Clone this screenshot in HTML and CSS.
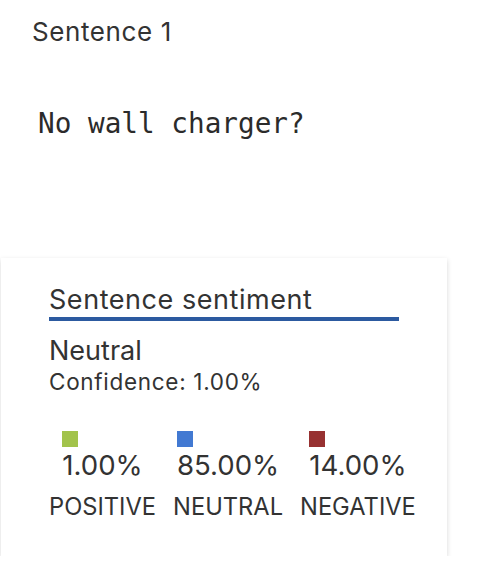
FILE: index.html
```html
<!DOCTYPE html>
<html>
<head>
<meta charset="utf-8">
<link rel="stylesheet" href="styles.css">
</head>
<body>
<div class="page">
  <div class="title">Sentence 1</div>
  <div class="sentence">No wall charger?</div>
  <div class="card">
    <div class="card-head">Sentence sentiment</div>
    <div class="result">Neutral</div>
    <div class="confidence">Confidence: 1.00%</div>
    <div class="legend">
      <div class="col">
        <div class="stat">
          <span class="swatch swatch-pos"></span>
          <span class="value">1.00%</span>
        </div>
        <div class="label">POSITIVE</div>
      </div>
      <div class="col">
        <div class="stat">
          <span class="swatch swatch-neu"></span>
          <span class="value">85.00%</span>
        </div>
        <div class="label">NEUTRAL</div>
      </div>
      <div class="col">
        <div class="stat">
          <span class="swatch swatch-neg"></span>
          <span class="value">14.00%</span>
        </div>
        <div class="label">NEGATIVE</div>
      </div>
    </div>
  </div>
</div>
</body>
</html>
```
FILE: styles.css
```css
html, body {
  margin: 0;
  padding: 0;
  background: #ffffff;
}
body {
  font-family: Inter, "Noto Sans", sans-serif;
  color: #333333;
}
.page {
  padding-top: 16px;
}
.title {
  margin-left: 32px;
  font-size: 26px;
  line-height: 32px;
  letter-spacing: 0.6px;
}
.sentence {
  margin-left: 38px;
  margin-top: 58.6px;
  font-family: "DejaVu Sans Mono", monospace;
  font-size: 27.7px;
  line-height: 34px;
  color: #2b2b2b;
}
.card {
  margin-top: 117px;
  margin-left: 1px;
  width: 446px;
  box-sizing: border-box;
  padding: 25px 0 34px 48px;
  background: #fff;
  box-shadow: 0 2px 5px rgba(0, 0, 0, 0.16);
}
.card-head {
  width: 350px;
  font-size: 27px;
  line-height: 34px;
  letter-spacing: 0.55px;
  border-bottom: 4px solid #2c5aa0;
}
.result {
  margin-top: 13.7px;
  font-size: 27px;
  line-height: 34px;
}
.confidence {
  font-size: 22.5px;
  line-height: 28px;
  letter-spacing: 0.7px;
}
.legend {
  display: flex;
  gap: 17px;
  margin-top: 35px;
}
.col {
  display: flex;
  flex-direction: column;
  align-items: center;
}
.stat {
  display: flex;
  flex-direction: column;
  align-items: flex-start;
}
.swatch {
  display: block;
  width: 16px;
  height: 16px;
  margin-bottom: 1px;
}
.swatch-pos { background: #a2c34b; }
.swatch-neu { background: #4279d2; }
.swatch-neg { background: #973131; }
.value {
  font-size: 27.6px;
  line-height: 34px;
}
.label {
  margin-top: 9.8px;
  font-size: 23.7px;
  line-height: 30px;
}
```
